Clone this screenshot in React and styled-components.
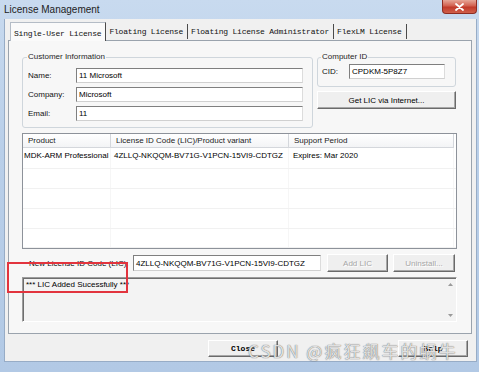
import React from "react";
import styled, { createGlobalStyle } from "styled-components";

const GlobalStyle = createGlobalStyle`
  html, body {
    margin: 0;
    padding: 0;
  }
  body {
    width: 479px;
    height: 372px;
    overflow: hidden;
    font-family: "Liberation Sans", Arial, sans-serif;
  }
`;

// Window chrome
const Window = styled.div`
  position: relative;
  width: 479px;
  height: 372px;
  box-sizing: border-box;
  display: flex;
  flex-direction: column;
  background: linear-gradient(180deg, #c8daef 0%, #b9cfe9 40%, #b2c9e5 100%);
`;

const TitleBar = styled.div`
  height: 19px;
  flex: none;
  display: flex;
  align-items: center;
  padding-left: 4px;
`;

const Title = styled.span`
  flex: 1;
  font-size: 10px;
  color: #1c1c1c;
  padding-bottom: 1px;
`;

const CloseBox = styled.div`
  align-self: flex-start;
  width: 35px;
  height: 14px;
  margin-right: 2px;
  box-sizing: border-box;
  border: 1px solid #8d2c22;
  border-top: none;
  border-radius: 0 0 4px 4px;
  background: linear-gradient(180deg, #e6a697 0%, #d2604f 45%, #c13a2a 55%, #d0604a 100%);
  display: flex;
  align-items: center;
  justify-content: center;
`;

const Client = styled.div`
  flex: 1;
  margin: 0 2px 10px 4px;
  border: 1px solid #97acc6;
  border-top: none;
  background: #f0f0f0;
  display: flex;
  flex-direction: column;
  padding: 3px 4px 0 3px;
  min-height: 0;
`;

// Tabs
const TabStrip = styled.div`
  height: 18px;
  display: flex;
  align-items: flex-end;
  padding-left: 2px;
`;

const Tab = styled.div`
  position: relative;
  z-index: 1;
  box-sizing: border-box;
  height: ${(p) => (p.$active ? "19px" : "15px")};
  margin-bottom: ${(p) => (p.$active ? "-1px" : "1px")};
  display: flex;
  align-items: flex-end;
  padding: 0 4px 3px 3px;
  font-family: "Liberation Mono", "Courier New", monospace;
  font-size: 8px;
  letter-spacing: -0.2px;
  color: #111;
  background: ${(p) => (p.$active ? "#fafafa" : "transparent")};
  border-left: ${(p) => (p.$active ? "1px solid #b4bcc6" : "none")};
  border-top: ${(p) => (p.$active ? "1px solid #b4bcc6" : "none")};
  border-right: 1px solid #4a4a4a;
  white-space: nowrap;
`;

const Panel = styled.div`
  height: 294px;
  flex: none;
  box-sizing: border-box;
  border: 1px solid #9aa3ad;
  background: #f7f7f7;
  padding: 11px 14px 0 13px;
  display: flex;
  flex-direction: column;
  gap: 5px;
`;

// Top row with group boxes
const TopRow = styled.div`
  height: 76px;
  flex: none;
  display: flex;
  gap: 4px;
  align-items: flex-start;
`;

const Group = styled.fieldset`
  margin: 0;
  min-width: 0;
  box-sizing: border-box;
  width: ${(p) => p.$width}px;
  height: ${(p) => p.$height}px;
  padding: ${(p) => p.$pad};
  border: 1px solid #cfd6dc;
  border-radius: 3px;
`;

const Legend = styled.legend`
  font-size: 8px;
  line-height: 10px;
  color: #262626;
  padding: 0 1px;
  margin-left: -1px;
`;

const FieldGrid = styled.div`
  display: grid;
  grid-template-columns: 48px 1fr;
  row-gap: 4px;
  align-items: center;
`;

const Label = styled.span`
  font-size: 8px;
  color: #111;
  white-space: nowrap;
  width: ${(p) => (p.$width ? `${p.$width}px` : "auto")};
  flex: none;
  box-sizing: border-box;
`;

const TextBox = styled.div`
  height: ${(p) => p.$h || 15}px;
  width: ${(p) => (p.$w ? `${p.$w}px` : "auto")};
  flex: none;
  box-sizing: border-box;
  background: #fff;
  border: 1px solid;
  border-color: #7f7f7f #dcdcdc #d0d0d0 #7f7f7f;
  font-size: 8px;
  color: #000;
  padding-left: 2px;
  display: flex;
  align-items: center;
  white-space: nowrap;
  overflow: hidden;
`;

const RightColumn = styled.div`
  width: 139px;
  display: flex;
  flex-direction: column;
  gap: 4px;
`;

const CidRow = styled.div`
  display: flex;
  align-items: center;
`;

const Button = styled.button`
  box-sizing: border-box;
  height: ${(p) => p.$h || 18}px;
  width: ${(p) => (p.$w ? `${p.$w}px` : "100%")};
  flex: none;
  margin: 0;
  padding: 0;
  border: 1px solid;
  border-color: #ffffff #6a6a6a #6a6a6a #ffffff;
  box-shadow: inset -1px -1px 0 #a7a7a7;
  background: #efefef;
  font-family: ${(p) => (p.$mono ? '"Liberation Mono", "Courier New", monospace' : '"Liberation Sans", Arial, sans-serif')};
  font-size: 8px;
  font-weight: ${(p) => (p.$mono ? "bold" : "normal")};
  color: ${(p) => (p.disabled ? "#a6a6a6" : "#000")};
  text-shadow: ${(p) => (p.disabled ? "1px 1px 0 #fff" : "none")};
  display: flex;
  align-items: center;
  justify-content: center;
`;

// List view
const List = styled.div`
  height: 116px;
  flex: none;
  box-sizing: border-box;
  border: 1px solid #8d929a;
  background: #fff;
  display: flex;
  flex-direction: column;
  overflow: hidden;
`;

const columns = "88px 178px 165px";

const HeaderRow = styled.div`
  display: grid;
  grid-template-columns: ${columns};
  height: 14px;
  flex: none;
`;

const HeaderCell = styled.div`
  box-sizing: border-box;
  font-size: 8px;
  color: #222;
  padding-left: 5px;
  display: flex;
  align-items: center;
  background: linear-gradient(180deg, #ffffff 0%, #f3f4f6 100%);
  border-right: 1px solid #d4d7dc;
  border-bottom: 1px solid #d4d7dc;
`;

const Row = styled.div`
  display: grid;
  grid-template-columns: ${columns};
  height: ${(p) => p.$h || 20}px;
  flex: none;
  box-sizing: border-box;
  border-bottom: 1px solid #f1f1f1;
`;

const Cell = styled.div`
  font-size: 8px;
  color: #000;
  padding: 3px 0 0 ${(p) => p.$pl || 2}px;
  white-space: nowrap;
  border-right: 1px solid #f6f6f6;
`;

// License entry row
const LicRow = styled.div`
  height: 18px;
  flex: none;
  display: flex;
  align-items: center;
`;

const LicLabel = styled.span`
  width: 111px;
  flex: none;
  box-sizing: border-box;
  padding-left: 7px;
  font-size: 8px;
  color: #111;
  white-space: nowrap;
`;

const LicButtons = styled.div`
  display: flex;
  gap: 5px;
  margin-left: 6px;
`;

// Status output box
const StatusBox = styled.div`
  height: 45px;
  flex: none;
  box-sizing: border-box;
  border: 1px solid;
  border-color: #9c9c9c #ffffff #ffffff #9c9c9c;
  box-shadow: inset 1px 1px 0 #6e6e6e;
  background: #f3f3f3;
  display: flex;
`;

const StatusText = styled.div`
  flex: 1;
  padding: 2px 3px 0 3px;
  font-size: 8px;
  color: #000;
`;

const ScrollTrack = styled.div`
  width: 9px;
  display: flex;
  flex-direction: column;
  justify-content: space-between;
  align-items: center;
  padding: 5px 0 4px;
  margin-right: 1px;
`;

// Footer
const Footer = styled.div`
  flex: 1;
  display: flex;
  align-items: flex-start;
  padding: 6px 4px 0 200px;
`;

const HelpWrap = styled.div`
  margin-left: auto;
`;

// Overlays
const Watermark = styled.div`
  position: absolute;
  left: 248px;
  top: 338px;
  font-family: "Noto Sans CJK SC", "Liberation Sans", sans-serif;
  font-size: 17px;
  letter-spacing: 2px;
  color: rgba(240, 240, 240, 0.9);
  text-shadow: 0 0 1px rgba(90, 90, 90, 0.7), 0 0 1px rgba(90, 90, 90, 0.7);
  white-space: nowrap;
  pointer-events: none;
`;

const Highlight = styled.div`
  position: absolute;
  left: 7px;
  top: 262px;
  width: 121px;
  height: 31px;
  box-sizing: border-box;
  border: 2px solid #e2343e;
  pointer-events: none;
`;

const Arrow = ({ up }) => (
  <svg width="5" height="3" viewBox="0 0 5 3">
    <path d={up ? "M0 3 L2.5 0 L5 3 Z" : "M0 0 L2.5 3 L5 0 Z"} fill="#9a9a9a" />
  </svg>
);

const App = () => {
  const rows = [21, 20, 20, 20, 19];

  return (
    <>
      <GlobalStyle />
      <Window>
        <TitleBar>
          <Title>License Management</Title>
          <CloseBox>
            <svg width="9" height="8" viewBox="0 0 9 8">
              <path d="M1 1 L8 7 M8 1 L1 7" stroke="#fff" strokeWidth="1.8" strokeLinecap="round" />
            </svg>
          </CloseBox>
        </TitleBar>

        <Client>
          <TabStrip>
            <Tab $active>Single-User License</Tab>
            <Tab>Floating License</Tab>
            <Tab>Floating License Administrator</Tab>
            <Tab>FlexLM License</Tab>
          </TabStrip>

          <Panel>
            <TopRow>
              <Group $width={291} $height={76} $pad="6px 9px 0 5px">
                <Legend>Customer Information</Legend>
                <FieldGrid>
                  <Label>Name:</Label>
                  <TextBox>11 Microsoft</TextBox>
                  <Label>Company:</Label>
                  <TextBox>Microsoft</TextBox>
                  <Label>Email:</Label>
                  <TextBox>11</TextBox>
                </FieldGrid>
              </Group>

              <RightColumn>
                <Group $width={139} $height={35} $pad="2px 11px 0 4px">
                  <Legend>Computer ID</Legend>
                  <CidRow>
                    <Label $width={27}>CID:</Label>
                    <TextBox $w={96}>CPDKM-5P8Z7</TextBox>
                  </CidRow>
                </Group>
                <Button>Get LIC via Internet...</Button>
              </RightColumn>
            </TopRow>

            <List>
              <HeaderRow>
                <HeaderCell>Product</HeaderCell>
                <HeaderCell>License ID Code (LIC)/Product variant</HeaderCell>
                <HeaderCell>Support Period</HeaderCell>
              </HeaderRow>
              {rows.map((h, i) => (
                <Row key={i} $h={h}>
                  <Cell $pl={1}>{i === 0 ? "MDK-ARM Professional" : ""}</Cell>
                  <Cell $pl={3}>{i === 0 ? "4ZLLQ-NKQQM-BV71G-V1PCN-15VI9-CDTGZ" : ""}</Cell>
                  <Cell $pl={4}>{i === 0 ? "Expires: Mar 2020" : ""}</Cell>
                </Row>
              ))}
            </List>

            <LicRow>
              <LicLabel>New License ID Code (LIC):</LicLabel>
              <TextBox $w={188} $h={16}>4ZLLQ-NKQQM-BV71G-V1PCN-15VI9-CDTGZ</TextBox>
              <LicButtons>
                <Button $w={61} disabled>Add LIC</Button>
                <Button $w={62} disabled>Uninstall...</Button>
              </LicButtons>
            </LicRow>

            <StatusBox>
              <StatusText>*** LIC Added Sucessfully ***</StatusText>
              <ScrollTrack>
                <Arrow up />
                <Arrow />
              </ScrollTrack>
            </StatusBox>
          </Panel>

          <Footer>
            <Button $w={70} $h={17} $mono>Close</Button>
            <HelpWrap>
              <Button $w={70} $h={17} $mono>Help</Button>
            </HelpWrap>
          </Footer>
        </Client>

        <Highlight />
        <Watermark>CSDN @疯狂飙车的蜗牛</Watermark>
      </Window>
    </>
  );
};

export default App;
